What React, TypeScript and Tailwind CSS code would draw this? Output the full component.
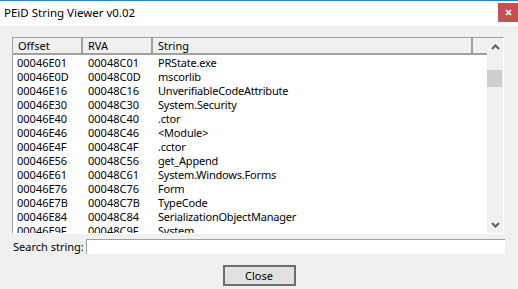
const rows: [string, string, string][] = [
  ['00046E01', '00048C01', 'PRState.exe'],
  ['00046E0D', '00048C0D', 'mscorlib'],
  ['00046E16', '00048C16', 'UnverifiableCodeAttribute'],
  ['00046E30', '00048C30', 'System.Security'],
  ['00046E40', '00048C40', '.ctor'],
  ['00046E46', '00048C46', '<Module>'],
  ['00046E4F', '00048C4F', '.cctor'],
  ['00046E56', '00048C56', 'get_Append'],
  ['00046E61', '00048C61', 'System.Windows.Forms'],
  ['00046E76', '00048C76', 'Form'],
  ['00046E7B', '00048C7B', 'TypeCode'],
  ['00046E84', '00048C84', 'SerializationObjectManager'],
  ['00046E9F', '00048C9F', 'System'],
];

const font = { fontFamily: '"Noto Sans", "Open Sans", sans-serif' };

function Chevron({ up }: { up?: boolean }) {
  return (
    <svg width="9" height="6" viewBox="0 0 9 6" className={up ? '' : 'rotate-180'}>
      <path d="M1 5 L4.5 1.5 L8 5" fill="none" stroke="#606060" strokeWidth="2" />
    </svg>
  );
}

function App() {
  return (
    <div
      className="flex h-[289px] w-[518px] flex-col overflow-hidden bg-[#f0f0f0] text-black"
      style={font}
    >
      {/* title bar */}
      <div className="flex h-[26px] shrink-0 items-start justify-between border-t border-[#1883d7] bg-white">
        <span className="mt-[4px] pl-[4px] text-[11.5px] leading-[16px]">PEiD String Viewer v0.02</span>
        <div className="mt-[2px] flex h-[19px] w-[20px] items-center justify-center bg-[#c75050]">
          <svg width="7" height="7" viewBox="0 0 7 7">
            <path d="M1 1 L6 6 M6 1 L1 6" stroke="white" strokeWidth="1.6" />
          </svg>
        </div>
      </div>

      <div className="flex flex-col px-[12px] pt-[11px]">
        {/* list view */}
        <div className="flex h-[197px] w-[492px] border border-b-white border-l-[#a0a0a0] border-r-white border-t-[#a0a0a0] bg-white">
          <div className="flex min-w-0 flex-1 flex-col overflow-hidden">
            <div className="flex h-[17px] shrink-0 border-b-2 border-[#a0a0a0] bg-[#f0f0f0] text-[11px] leading-[15px]">
              <div className="w-[70px] border-r-2 border-[#a0a0a0] pl-[5px]">Offset</div>
              <div className="w-[70px] border-r-2 border-[#a0a0a0] pl-[5px]">RVA</div>
              <div className="w-[320px] border-r-2 border-[#a0a0a0] pl-[5px]">String</div>
              <div className="flex-1" />
            </div>
            <div className="pt-[1px] text-[11px]">
              {rows.map(([off, rva, str]) => (
                <div key={off} className="flex h-[14px] items-center leading-[14px]">
                  <span className="w-[70px] pl-[4px]">{off}</span>
                  <span className="w-[70px] pl-[5px]">{rva}</span>
                  <span className="pl-[5px] tracking-[-0.2px]">{str}</span>
                </div>
              ))}
            </div>
          </div>
          {/* scrollbar */}
          <div className="flex w-[16px] shrink-0 flex-col bg-[#f0f0f0]">
            <div className="flex h-[17px] items-center justify-center">
              <Chevron up />
            </div>
            <div className="mt-[15px] h-[17px] w-[15px] bg-[#cdcdcd]" />
            <div className="flex-1" />
            <div className="flex h-[17px] items-center justify-center">
              <Chevron />
            </div>
          </div>
        </div>

        {/* search */}
        <div className="mt-[5px] flex items-center">
          <span className="w-[74px] pl-[1px] text-[11px] leading-[15px]">Search string:</span>
          <div className="h-[15px] w-[419px] border-l border-t border-[#a0a0a0] bg-white" />
        </div>

        <button
          type="button"
          className="mx-auto mt-[11px] h-[21px] w-[73px] border-2 border-[#6d6d6d] bg-[#e1e1e1] text-[11px] leading-[15px]"
        >
          Close
        </button>
      </div>
    </div>
  );
}

export default App;
